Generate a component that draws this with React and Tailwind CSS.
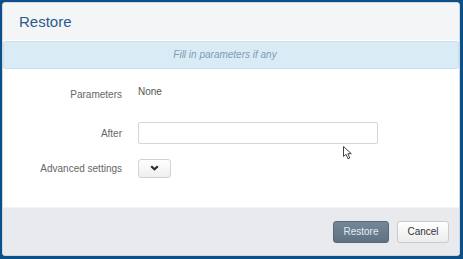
import React from "react";

export default function App() {
  return (
    <div
      className="w-[463px] h-[259px] bg-[#0b5088] pt-[2px] pl-[2px] pr-[3px] pb-[3px] relative"
      style={{ fontFamily: '"Liberation Sans", Arial, sans-serif' }}
    >
      <div className="w-full h-full bg-white border border-[#d3d7db] rounded-[3px] flex flex-col overflow-hidden">
        {/* header */}
        <div className="h-[37px] bg-[#f4f5f7] flex items-center pl-[16px] shrink-0">
          <span className="text-[15px] text-[#275c8d] leading-none">Restore</span>
        </div>
        <div className="h-[1px] bg-white shrink-0" />
        {/* info */}
        <div className="h-[28px] bg-[#d9ebf5] border border-[#c8e1f0] rounded-[2px] flex items-center justify-center shrink-0 pr-[12px]">
          <span className="text-[10px] italic text-[#7e9bb5] leading-none">Fill in parameters if any</span>
        </div>
        {/* body */}
        <div className="flex-1 flex flex-col pt-[14px]">
          <div className="h-[22px] flex items-center">
            <div className="w-[119px] text-right text-[10px] text-[#666]">Parameters</div>
            <div className="ml-[16px] mb-[6px] text-[10px] text-[#555]">None</div>
          </div>
          <div className="h-[22px] mt-[17px] flex items-center">
            <div className="w-[119px] text-right text-[10px] text-[#666]">After</div>
            <input
              type="text"
              className="ml-[16px] w-[240px] h-[22px] border border-[#d6d6d6] rounded-[2px] bg-white outline-none"
            />
          </div>
          <div className="h-[20px] mt-[14px] flex items-center">
            <div className="w-[119px] text-right text-[10px] text-[#666]">Advanced settings</div>
            <button className="ml-[16px] w-[33px] h-[19px] border border-[#d2d2d2] rounded-[3px] bg-gradient-to-b from-white to-[#efefef] flex items-center justify-center">
              <svg width="9" height="6" viewBox="0 0 9 6">
                <polyline points="1.2,1.2 4.5,4.3 7.8,1.2" fill="none" stroke="#2b2b2b" strokeWidth="2.2" />
              </svg>
            </button>
          </div>
        </div>
        {/* footer */}
        <div className="h-[48px] bg-[#e9eaed] border-t border-[#f2f3f5] flex items-center justify-end pr-[10px] gap-[8px] shrink-0">
          <button className="w-[56px] h-[22px] rounded-[3px] border border-[#58697a] bg-gradient-to-b from-[#73879a] to-[#5f7283] text-[10px] text-[#e4ebf0]">
            Restore
          </button>
          <button className="w-[52px] h-[22px] rounded-[3px] border border-[#cbcbcb] bg-gradient-to-b from-white to-[#ececec] text-[10px] text-[#333]">
            Cancel
          </button>
        </div>
      </div>
      {/* mouse cursor */}
      <svg className="absolute left-[343px] top-[146px]" width="10" height="14" viewBox="0 0 10 14">
        <path d="M0.5 0.5 L0.5 10.5 L3 8.3 L5 12.8 L6.8 12 L4.9 7.7 L8.3 7.7 Z" fill="white" stroke="#444" strokeWidth="1" strokeLinejoin="round" />
      </svg>
    </div>
  );
}
